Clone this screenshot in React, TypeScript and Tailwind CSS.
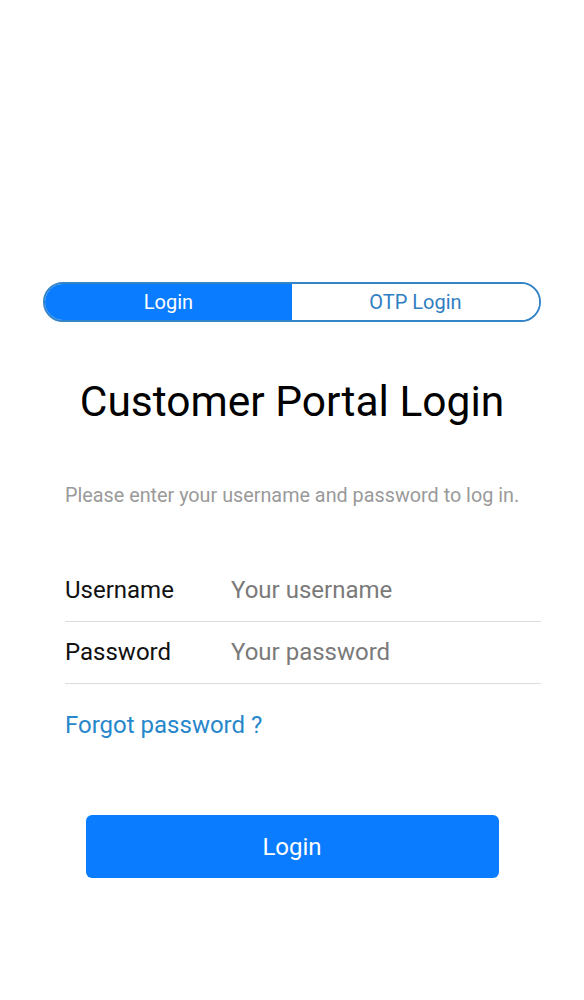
import React from "react";

export default function App() {
  return (
    <div className="min-h-[1000px] w-full bg-white" style={{ fontFamily: "Roboto, 'Noto Sans', Arial, sans-serif" }}>
      <div className="px-[43px] pt-[282px]">
        <div className="flex h-10 w-full overflow-hidden rounded-full border-2 border-[#3484c8]">
          <button className="flex-1 bg-[#0a7cff] text-[20px] text-white">Login</button>
          <button className="flex-1 bg-white text-[20px] text-[#2f7ec2]">OTP Login</button>
        </div>
        <h1 className="mt-[54px] text-center text-[42.5px] leading-[52px] text-black">Customer Portal Login</h1>
        <p className="mt-[54px] pl-[22px] text-[19.8px] leading-[28px] text-[#9a9a9a]">
          Please enter your username and password to log in.
        </p>
        <div className="mt-[50px] pl-[22px]">
          <div className="flex h-[62px] items-center border-b border-[#dcdcdc] pb-[2px]">
            <span className="w-[166px] text-[24px] text-[#111]">Username</span>
            <span className="text-[24px] text-[#7a7a7a]">Your username</span>
          </div>
          <div className="flex h-[62px] items-center border-b border-[#dcdcdc] pb-[2px]">
            <span className="w-[166px] text-[24px] text-[#111]">Password</span>
            <span className="text-[24px] text-[#7a7a7a]">Your password</span>
          </div>
          <div className="mt-[27px] text-[24px] leading-[28px] text-[#2787cb]">Forgot password ?</div>
        </div>
        <div className="mt-[76px] flex justify-center">
          <button className="h-[63px] w-[413px] rounded-[6px] bg-[#0a7cff] text-[24px] text-white">Login</button>
        </div>
      </div>
    </div>
  );
}
